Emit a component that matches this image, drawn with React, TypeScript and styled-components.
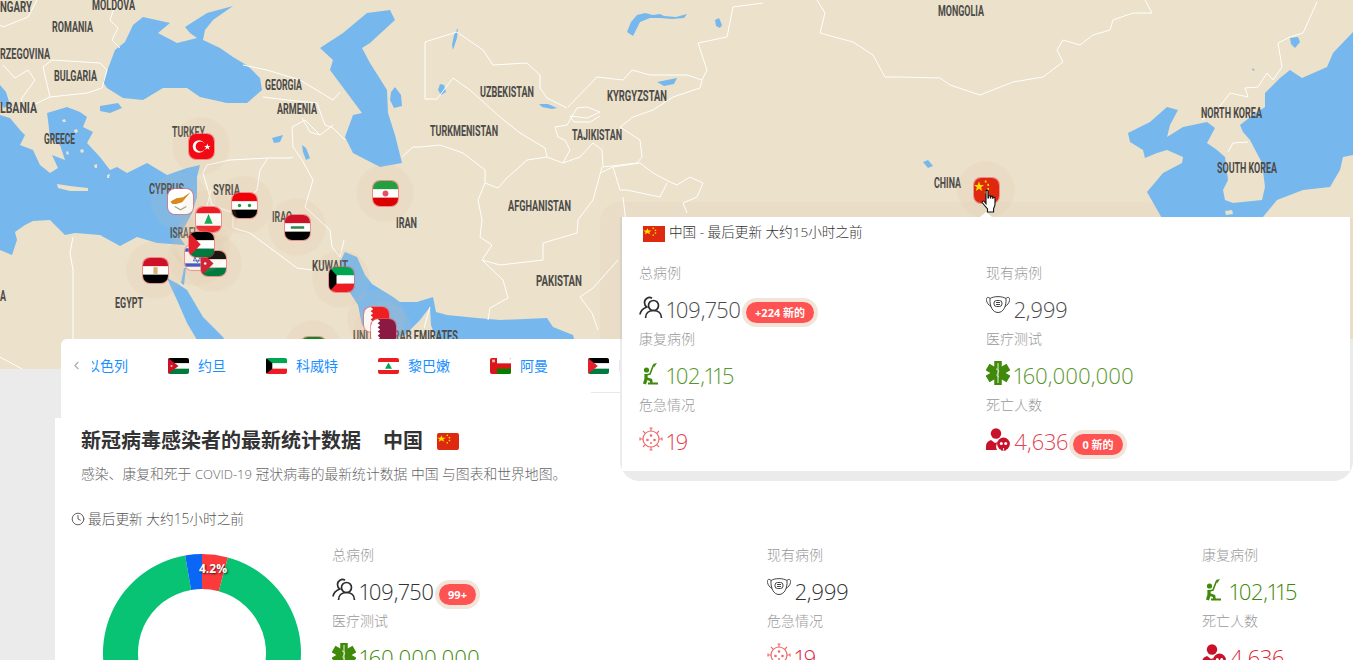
import * as React from 'react';
import styled, { createGlobalStyle } from 'styled-components';
import { ChevronLeft, Clock } from 'lucide-react';

const GlobalStyle = createGlobalStyle`
    html, body {
        margin: 0;
        padding: 0;
        overflow: hidden;
        background: #ebebeb;
        font-family: "Open Sans", "Noto Sans CJK SC", sans-serif;
    }
`;

const WATER = '#76b8ee';
const LAND = '#ece1ca';

const seas = [
    // black sea + azov
    '103,82 115,50 125,42 133,25 143,17 170,23 158,33 177,43 197,38 190,33 185,27 207,13 233,6 213,20 205,30 203,40 220,48 233,57 248,66 260,78 262,90 247,103 227,103 200,97 187,88 163,88 143,100 123,98 107,88',
    // caspian
    '367,13 390,10 395,20 370,43 362,48 370,63 387,90 388,113 395,135 402,163 380,167 353,153 345,137 353,115 362,113 330,70 333,60 320,48 343,33',
    // mediterranean
    '0,115 10,118 20,130 25,135 20,145 33,150 40,165 50,173 58,168 52,155 65,160 60,145 50,138 48,120 47,113 67,107 80,112 87,117 83,127 93,132 87,143 100,157 110,170 117,167 127,173 147,163 167,175 187,168 200,165 197,177 197,197 192,213 183,230 180,238 185,245 157,243 137,237 120,246 100,235 75,233 65,235 50,220 33,221 25,225 15,232 17,240 12,255 0,250',
    // adriatic
    '0,85 6,92 10,105 4,108 0,102',
    // marmara
    '100,106 118,103 122,108 110,113 100,111',
    // red sea
    '167,278 178,284 187,290 203,317 223,337 240,369 215,369 200,345 187,323 177,300 170,285',
    // gulf of aqaba
    '181,283 184,268 186,268 184,285',
    // persian gulf + oman
    '345,252 357,257 365,275 372,284 393,297 400,302 417,302 433,297 436,312 447,315 477,318 500,320 547,318 553,327 573,335 575,342 437,342 431,325 430,307 420,320 405,335 385,342 362,325 358,305 345,285 340,262',
    // east china sea, sea of japan
    '1353,32 1333,53 1327,67 1302,78 1290,70 1280,78 1265,93 1265,107 1253,115 1240,125 1243,132 1250,140 1262,163 1265,187 1262,200 1233,203 1225,200 1223,190 1228,180 1225,157 1217,150 1207,143 1215,128 1207,122 1183,127 1167,137 1170,125 1178,110 1167,107 1150,122 1128,133 1130,142 1143,150 1145,158 1157,153 1167,150 1183,157 1182,163 1163,173 1147,192 1163,220 1353,220',
];

const lakes = [
    '627,32 631,22 637,15 645,13 653,15 660,14 664,16 676,17 687,14 684,18 672,19 660,18 650,18 640,22 633,36',
    '657,82 667,80 677,78 674,84 664,86',
    '452,45 454,35 458,28 457,38 453,50',
    '438,90 440,84 444,85 446,92 441,95',
    '272,138 283,135 280,142 274,143',
    '302,145 306,148 310,158 306,160 303,152',
    '391,92 395,87 401,95 402,106 394,108 390,100',
    '715,20 719,18 722,25 720,28 716,26',
    '923,162 928,160 933,166 928,168',
    '1290,38 1298,37 1300,42 1295,48 1291,44',
    '539,104 548,104 557,108 552,109 542,107',
    '1252,70 1253,68 1255,71',
];

const landPatches = [
    // japan
    '1353,155 1343,157 1340,170 1330,187 1303,190 1277,200 1263,217 1353,220',
    // crete
    '57,184 70,186 88,188 88,191 70,191 58,188',
    // jeju-ish bits and aegean isles
    '1225,211 1232,210 1233,214 1226,215',
    '74,130 77,129 78,132 75,133',
    '66,152 68,151 69,154 67,155',
    '80,150 83,149 84,152 81,153',
    '94,165 97,164 97,168 95,168',
    '107,175 110,174 109,178 107,178',
    '62,120 65,119 66,122 63,122',
];

const borders = [
    '203,173 207,165 230,160 268,158 290,158 293,157',
    '292,127 293,147 302,160 313,180 305,207 330,230 332,247 340,257',
    '268,158 260,170 257,190 233,213 233,228',
    '233,228 250,233 297,268 313,270 330,263',
    '203,173 208,190 212,205 233,213',
    '243,65 267,70 300,80 333,100 340,92',
    '263,97 287,100 317,103 325,125 333,128 345,140',
    '292,127 305,120 320,135 333,125',
    '302,118 310,132 320,135',
    '402,157 413,147 420,147 440,145 463,153 485,170 485,183 498,188 507,178 527,160 547,157 563,163 580,157 593,143 602,150 603,167 637,163',
    '485,183 478,200 482,220 480,237 492,245 482,260 503,280 508,298 490,308 488,320',
    '482,260 500,265 543,260 543,243 577,233 578,220 583,213 593,200 602,167',
    '618,260 593,288 580,297 592,313 598,330',
    '425,99 425,42 457,32 483,50 493,65 527,63 540,75 540,88 547,98 567,108',
    '425,99 437,99 453,78 470,90 500,117 520,133 545,148 547,157',
    '568,107 597,77 623,80 632,70 650,75 687,75 702,80 700,88 673,97 653,110 633,117 620,127 640,140 642,157 637,163',
    '555,127 567,125 577,108 587,107 600,112 587,118 570,116 574,122 590,122 600,116',
    '555,127 558,137 565,140 570,150 563,163',
    '702,80 707,70 698,43 727,37 733,7 763,3',
    '817,0 825,13 820,33 853,42 873,55 885,77 900,77 940,78 950,85 980,95 1013,82 1043,77 1063,62 1057,50 1063,40 1080,45 1093,35 1110,30 1113,20 1133,13 1152,13 1145,0',
    '1317,2 1303,33 1290,37 1278,43 1282,67 1273,80 1267,73 1258,87 1245,88 1248,97 1230,93 1217,110 1202,120',
    '1228,152 1233,143 1248,142',
    '600,173 613,167 640,163 653,173 670,182 677,185 690,177 703,183 697,197 683,203 687,213',
    '613,167 620,190 627,190 660,197 667,183',
    '623,197 628,240',
    '73,237 70,253 73,270 73,342',
    '0,357 22,369',
    '52,60 100,63 107,70 102,88 87,93 50,97 43,67 52,60',
    '37,0 28,17 3,27 0,25',
    '117,0 110,20 118,28 112,40 120,48',
    '3,65 15,78 28,70 35,80 22,98 18,112',
    '50,97 18,112',
    '211,190 202,225 192,245',
    '340,257 344,240',
    '430,307 424,328',
];

const labels: [string, number, number, number][] = [
    ['NGARY', 0, 32, 7],
    ['MOLDOVA', 92, 135, 5],
    ['ROMANIA', 52, 93, 27],
    ['RZEGOVINA', 0, 50, 54],
    ['BULGARIA', 54, 97, 76],
    ['LBANIA', 0, 37, 108],
    ['GREECE', 44, 75, 139],
    ['GEORGIA', 265, 302, 85],
    ['ARMENIA', 277, 317, 109],
    ['TURKEY', 172, 205, 132],
    ['CYPRUS', 149, 184, 189],
    ['SYRIA', 213, 240, 190],
    ['IRAQ', 272, 292, 217],
    ['IRAN', 396, 417, 223],
    ['ISRAEL', 170, 198, 233],
    ['EGYPT', 115, 143, 303],
    ['KUWAIT', 312, 348, 266],
    ['A', 0, 6, 296],
    ['PAKISTAN', 536, 582, 281],
    ['UNITED ARAB EMIRATES', 353, 458, 336],
    ['UZBEKISTAN', 480, 534, 92],
    ['KYRGYZSTAN', 607, 667, 96],
    ['TURKMENISTAN', 430, 498, 131],
    ['TAJIKISTAN', 572, 622, 135],
    ['AFGHANISTAN', 508, 571, 206],
    ['MONGOLIA', 938, 984, 11],
    ['CHINA', 934, 961, 183],
    ['NORTH KOREA', 1201, 1262, 113],
    ['SOUTH KOREA', 1217, 1277, 168],
];

const Stripes = ({ top, mid, bottom }: { top: string; mid: string; bottom: string }) => (
    <>
        <rect width="30" height="10" fill={top} />
        <rect y="10" width="30" height="10" fill={mid} />
        <rect y="20" width="30" height="10" fill={bottom} />
    </>
);

const Serrated = ({ color }: { color: string }) => (
    <>
        <rect width="30" height="30" fill={color} />
        <polygon points="0,0 8,0 11,2.5 8,5 11,7.5 8,10 11,12.5 8,15 11,17.5 8,20 11,22.5 8,25 11,27.5 8,30 0,30" fill="#fff" />
    </>
);

const flags: Record<string, React.ReactNode> = {
    jo: (
        <>
            <Stripes top="#000" mid="#fff" bottom="#007a3d" />
            <polygon points="0,0 15,15 0,30" fill="#ce1126" />
            <circle cx="5" cy="15" r="1.5" fill="#fff" />
        </>
    ),
    ps: (
        <>
            <Stripes top="#000" mid="#fff" bottom="#007a3d" />
            <polygon points="0,0 14,15 0,30" fill="#e4202c" />
        </>
    ),
    kw: (
        <>
            <Stripes top="#00a651" mid="#fff" bottom="#ed1c24" />
            <polygon points="0,0 9,10 9,20 0,30" fill="#000" />
        </>
    ),
    lb: (
        <>
            <rect width="30" height="30" fill="#fff" />
            <rect width="30" height="7.5" fill="#ed1c24" />
            <rect y="22.5" width="30" height="7.5" fill="#ed1c24" />
            <polygon points="15,8.5 20,20 10,20" fill="#00a651" />
        </>
    ),
    om: (
        <>
            <rect width="30" height="30" fill="#db161b" />
            <rect x="10" width="20" height="10" fill="#fff" />
            <rect x="10" y="20" width="20" height="10" fill="#008000" />
            <rect x="3" y="3" width="4" height="5" fill="#f5b5b5" />
        </>
    ),
    il: (
        <>
            <rect width="30" height="30" fill="#fff" />
            <rect y="4" width="30" height="4" fill="#1a3fc4" />
            <rect y="22" width="30" height="4" fill="#1a3fc4" />
            <polygon points="15,9 20,19 10,19" fill="none" stroke="#1a3fc4" />
            <polygon points="15,21 20,11 10,11" fill="none" stroke="#1a3fc4" />
        </>
    ),
    eg: (
        <>
            <Stripes top="#ce1126" mid="#fff" bottom="#000" />
            <rect x="12.5" y="11" width="5" height="8" fill="#d8b070" />
        </>
    ),
    tr: (
        <>
            <rect width="30" height="30" fill="#f10a13" />
            <circle cx="12" cy="15" r="7.5" fill="#fff" />
            <circle cx="14" cy="15" r="6" fill="#f10a13" />
            <polygon points="22,11.5 23,14.3 26,14.3 23.6,16 24.5,19 22,17.2 19.5,19 20.4,16 18,14.3 21,14.3" fill="#fff" />
        </>
    ),
    cy: (
        <>
            <rect width="30" height="30" fill="#fff" />
            <polygon points="3,15 10,11 18,10 27,4 21,11 17,16 10,18 5,18" fill="#d98a1f" />
            <path d="M8 21l7 4 7-4" stroke="#9aa88a" strokeWidth="1.5" fill="none" />
        </>
    ),
    sy: (
        <>
            <Stripes top="#f00008" mid="#fff" bottom="#000" />
            <circle cx="9" cy="15" r="2" fill="#1a9a3c" />
            <circle cx="21" cy="15" r="2" fill="#1a9a3c" />
        </>
    ),
    iq: (
        <>
            <Stripes top="#ce1126" mid="#fff" bottom="#000" />
            <rect x="7" y="13.5" width="16" height="3" fill="#2a8a4a" />
        </>
    ),
    ir: (
        <>
            <Stripes top="#239f40" mid="#fff" bottom="#da0000" />
            <circle cx="15" cy="15" r="3.5" fill="#e0506a" />
        </>
    ),
    bh: <Serrated color="#f10a13" />,
    qa: <Serrated color="#8a1a42" />,
    sa: <rect width="30" height="30" fill="#0a8a22" />,
    cn: (
        <>
            <rect width="30" height="30" fill="#de2910" />
            <polygon points="6,4 7.5,8.5 12,8.5 8.5,11.2 9.8,15.5 6,13 2.2,15.5 3.5,11.2 0,8.5 4.5,8.5" fill="#ffde00" />
            <rect x="13" y="3" width="2" height="2.5" fill="#ffde00" />
            <rect x="16" y="7" width="2" height="2.5" fill="#ffde00" />
            <rect x="16" y="12" width="2" height="2.5" fill="#ffde00" />
            <rect x="13" y="16" width="2" height="2.5" fill="#ffde00" />
        </>
    ),
};

const Flag = ({ code }: { code: string }) => (
    <FlagSvg viewBox="0 0 30 30" preserveAspectRatio="none">
        {flags[code]}
    </FlagSvg>
);

const UsersIcon = () => (
    <IconSvg viewBox="0 0 24 24" fill="none" stroke="#2c2c2c" strokeWidth="1.7">
        <circle cx="14.5" cy="10.5" r="5" />
        <path d="M6.5 23c0-5 3.5-7.5 8-7.5s8 2.5 8 7.5" />
        <path d="M13 3.2A5 5 0 0 0 5.5 7.5c0 2 .8 3.5 2.3 4.5C4 13.5 1.5 16 1 19.5" />
    </IconSvg>
);

const MaskIcon = () => (
    <IconSvg viewBox="0 0 24 24" fill="none" stroke="#444" strokeWidth="1">
        <path d="M4 3.5C8 1 16 1 20 3.5C20.5 11 17.5 17.5 12 17.5C6.5 17.5 3.5 11 4 3.5Z" />
        <path d="M4 3.5C1.5 1 0 3 .5 5.500C1 8 2.500 10 5 11.500" />
        <path d="M20 3.500C22.500 1 24 3 23.500 5.500C23 8 21.500 10 19 11.500" />
        <rect x="8" y="5.500" width="8" height="6" rx="2.500" />
        <path d="M10 7.500h4M10 9.500h4" />
    </IconSvg>
);

const RecoverIcon = () => (
    <IconSvg viewBox="0 0 24 24" fill="#3f8a0a" stroke="none">
        <circle cx="7.500" cy="9" r="2.600" />
        <path d="M7 13L7 18L5.500 23" fill="none" stroke="#3f8a0a" strokeWidth="3.200" />
        <path d="M7 14L11 13L14.500 4" fill="none" stroke="#3f8a0a" strokeWidth="1.600" />
        <path d="M7.500 17.500L12 19L12.500 22.500" fill="none" stroke="#3f8a0a" strokeWidth="2.600" />
        <polygon points="14,3 18,2 15,6.500" />
        <rect x="9" y="21.500" width="10" height="2" />
    </IconSvg>
);

const StarLifeIcon = () => (
    <IconSvg viewBox="0 0 24 24" fill="none">
        <g stroke="#3f8a0a" strokeWidth="7.500">
            <path d="M12 0v24" />
            <path d="M1.600 6l20.800 12" />
            <path d="M22.400 6L1.600 18" />
        </g>
        <path d="M12 2v20M10 8c3 0 3 3 2 4s-2 3 1 4" stroke="#e7f0dc" strokeWidth="1" />
    </IconSvg>
);

const VirusIcon = () => (
    <IconSvg viewBox="0 0 24 24" fill="none" stroke="#f06a6a" strokeWidth="1.200">
        <circle cx="12" cy="12" r="8" />
        <path d="M12 4V1M12 23v-3M4 12H1M23 12h-3M6.300 6.300L4 4M20 20l-2.300-2.300M6.300 17.700L4 20M20 4l-2.300 2.300" />
        <path d="M10.500 1h3M10.500 23h3M1 10.500v3M23 10.500v3" />
        <g fill="#f06a6a" stroke="none">
            <circle cx="12" cy="8.500" r="1.300" />
            <circle cx="8.500" cy="13" r="1.300" />
            <circle cx="15.500" cy="13" r="1.300" />
            <circle cx="12" cy="16" r="1" />
        </g>
    </IconSvg>
);

const DeathIcon = () => (
    <IconSvg viewBox="0 0 24 24" fill="#c9112a">
        <circle cx="10" cy="6.500" r="5.200" />
        <path d="M0 23v-4c0-3 2-5 5-6l4 3 3-1c-2 2-2.500 5-1 8Z" />
        <circle cx="17.500" cy="17" r="6.400" />
        <rect x="15" y="20" width="5" height="3.500" />
        <g fill="#fff">
            <circle cx="15.300" cy="16.500" r="1.500" />
            <circle cx="19.700" cy="16.500" r="1.500" />
            <rect x="17" y="21" width=".9" height="2.500" />
        </g>
    </IconSvg>
);

type Tone = 'plain' | 'green' | 'red';

type Stat = {
    label: string;
    value: string;
    tone: Tone;
    icon: React.ReactNode;
    badge?: string;
};

const popupStats: Stat[] = [
    { label: '总病例', value: '109,750', tone: 'plain', icon: <UsersIcon />, badge: '+224 新的' },
    { label: '现有病例', value: '2,999', tone: 'plain', icon: <MaskIcon /> },
    { label: '康复病例', value: '102,115', tone: 'green', icon: <RecoverIcon /> },
    { label: '医疗测试', value: '160,000,000', tone: 'green', icon: <StarLifeIcon /> },
    { label: '危急情况', value: '19', tone: 'red', icon: <VirusIcon /> },
    { label: '死亡人数', value: '4,636', tone: 'red', icon: <DeathIcon />, badge: '0 新的' },
];

const mainStats: Stat[] = [
    { label: '总病例', value: '109,750', tone: 'plain', icon: <UsersIcon />, badge: '99+' },
    { label: '现有病例', value: '2,999', tone: 'plain', icon: <MaskIcon /> },
    { label: '康复病例', value: '102,115', tone: 'green', icon: <RecoverIcon /> },
    { label: '医疗测试', value: '160,000,000', tone: 'green', icon: <StarLifeIcon /> },
    { label: '危急情况', value: '19', tone: 'red', icon: <VirusIcon /> },
    { label: '死亡人数', value: '4,636', tone: 'red', icon: <DeathIcon /> },
];

const markers: [string, number, number][] = [
    ['ir', 385, 193],
    ['tr', 201, 146],
    ['cy', 180, 201],
    ['sy', 244, 205],
    ['lb', 208, 219],
    ['iq', 297, 227],
    ['eg', 155, 270],
    ['il', 197, 257],
    ['jo', 213, 263],
    ['ps', 201, 244],
    ['kw', 341, 279],
    ['sa', 313, 349],
    ['bh', 376, 319],
    ['qa', 383, 331],
    ['cn', 986, 190],
];

const tabs = [
    ['jo', '约旦'],
    ['kw', '科威特'],
    ['lb', '黎巴嫩'],
    ['om', '阿曼'],
    ['ps', '巴勒斯坦'],
];

const StatList = ({ stats, soft }: { stats: Stat[]; soft?: boolean }) => (
    <>
        {stats.map(s => (
            <StatBlock key={s.label}>
                <StatLabel>{s.label}</StatLabel>
                <StatValue>
                    <IconBox>{s.icon}</IconBox>
                    <StatNum $tone={s.tone} $soft={soft}>{s.value}</StatNum>
                    {s.badge && <Badge>{s.badge}</Badge>}
                </StatValue>
            </StatBlock>
        ))}
    </>
);

// donut slice between two clock angles
const slice = (from: number, to: number) => {
    const pt = (r: number, a: number) => {
        const rad = ((a - 90) * Math.PI) / 180;
        return `${(99 + r * Math.cos(rad)).toFixed(2)} ${(99 + r * Math.sin(rad)).toFixed(2)}`;
    };
    const large = to - from > 180 ? 1 : 0;
    return `M${pt(99, from)}A99 99 0 ${large} 1 ${pt(99, to)}L${pt(64, to)}A64 64 0 ${large} 0 ${pt(64, from)}Z`;
};

export default function App() {
    return (
        <Page>
            <GlobalStyle />
            <MapArea>
                <MapSvg viewBox="0 0 1353 369">
                    <rect x="600" y="202" width="753" height="180" rx="20" fill="#e9ddc7" />
                    {seas.map((p, i) => <polygon key={i} points={p} fill={WATER} />)}
                    {lakes.map((p, i) => <polygon key={i} points={p} fill={WATER} />)}
                    {landPatches.map((p, i) => <polygon key={i} points={p} fill={LAND} />)}
                    {borders.map((p, i) => (
                        <polyline key={i} points={p} fill="none" stroke="#fff" strokeWidth="1" />
                    ))}
                    <rect x="620" y="217" width="2" height="122" fill="#d8d2c4" />
                    {labels.map(([name, x1, x2, y]) => (
                        <CountryText key={name} x={x1} y={y + 5} textLength={x2 - x1} lengthAdjust="spacingAndGlyphs">
                            {name}
                        </CountryText>
                    ))}
                </MapSvg>
                {markers.map(([code, x, y]) => (
                    <Marker key={code} $x={x} $y={y}>
                        <MarkerTile>
                            <Flag code={code} />
                        </MarkerTile>
                    </Marker>
                ))}
                <HandCursor viewBox="0 0 17 24">
                    <path
                        d="M5 2.200c0-1.400 2-1.400 2 0V9h.4V7.600c0-1.200 2-1.200 2 0V9h.3V8c0-1.200 2-1.200 2 0v1.200h.3V9c0-1.100 2-1.100 2 0v6c0 2.200-.7 3.200-1.400 4.500V23H6.500v-3L1.500 14c-1-1.300.7-2.700 1.800-1.500L5 14.600Z"
                        fill="#fff"
                        stroke="#111"
                        strokeWidth="1.100"
                    />
                </HandCursor>
            </MapArea>

            <TabsCard>
                <TabRow>
                    <TabArrow>
                        <ChevronLeft size={13} color="#aaa" />
                    </TabArrow>
                    <TabViewport>
                        <TabList>
                            <TabLink>以色列</TabLink>
                            {tabs.map(([code, name]) => (
                                <TabItem key={code}>
                                    <TabFlag><Flag code={code} /></TabFlag>
                                    <TabLink>{name}</TabLink>
                                </TabItem>
                            ))}
                        </TabList>
                    </TabViewport>
                </TabRow>
                <TabRule />
            </TabsCard>

            <MainCard>
                <Heading>
                    <span>新冠病毒感染者的最新统计数据</span>
                    <HeadingCountry>中国</HeadingCountry>
                    <HeadingFlag><Flag code="cn" /></HeadingFlag>
                </Heading>
                <SubTitle>
                    感染、康复和死于 <LatinRun>COVID-19</LatinRun> 冠状病毒的最新统计数据 中国 与图表和世界地图。
                </SubTitle>
                <UpdatedRow>
                    <Clock size={14} color="#555" strokeWidth={1.6} />
                    最后更新 大约15小时之前
                </UpdatedRow>
                <SummaryRow>
                    <ChartBox>
                        <svg width="198" height="198" viewBox="0 0 198 198">
                            <path d={slice(15.1, 350.2)} fill="#07c373" />
                            <path d={slice(350.2, 360)} fill="#0a66f5" />
                            <path d={slice(0, 15.1)} fill="#fb3a3c" />
                        </svg>
                        <ChartLabel>4.2%</ChartLabel>
                    </ChartBox>
                    <MainGrid>
                        <StatList stats={mainStats} />
                    </MainGrid>
                </SummaryRow>
            </MainCard>

            <PopupBacking />
            <Popup>
                <PopupArrow />
                <PopupHeader>
                    <PopupFlag><Flag code="cn" /></PopupFlag>
                    中国 - 最后更新 大约15小时之前
                </PopupHeader>
                <PopupGrid>
                    <StatList stats={popupStats} soft />
                </PopupGrid>
            </Popup>
        </Page>
    );
}

const Page = styled.div`
    position: relative;
    width: 1353px;
    height: 660px;
    overflow: hidden;
    background: #ebebeb;
`;

const MapArea = styled.div`
    position: relative;
    height: 369px;
    overflow: hidden;
    background: ${LAND};
`;

const MapSvg = styled.svg`
    display: block;
    width: 1353px;
    height: 369px;
`;

const CountryText = styled.text`
    font-family: "Roboto", sans-serif;
    font-weight: 700;
    font-size: 14px;
    fill: #4b4a48;
`;

const Marker = styled.div<{ $x: number; $y: number }>`
    position: absolute;
    left: ${p => p.$x - 28}px;
    top: ${p => p.$y - 28}px;
    width: 56px;
    height: 56px;
    border-radius: 50%;
    background: rgba(222, 190, 160, 0.12);
    box-shadow: 0 0 0 1px rgba(222, 196, 170, 0.12);
    display: flex;
    align-items: center;
    justify-content: center;
`;

const MarkerTile = styled.div`
    width: 25px;
    height: 25px;
    border-radius: 7px;
    overflow: hidden;
    box-shadow: 0 0 0 1px rgba(240, 90, 100, 0.6);
    display: flex;
`;

const FlagSvg = styled.svg`
    display: block;
    width: 100%;
    height: 100%;
`;

const HandCursor = styled.svg`
    position: absolute;
    left: 981px;
    top: 189px;
    width: 17px;
    height: 24px;
`;

const TabsCard = styled.div`
    position: relative;
    z-index: 1;
    margin: -30px 0 0 61px;
    height: 79px;
    background: #fff;
    border-top-left-radius: 6px;
`;

const TabRow = styled.div`
    display: flex;
    align-items: center;
    height: 53px;
`;

const TabArrow = styled.div`
    width: 31px;
    padding-left: 9px;
    box-sizing: border-box;
    display: flex;
    align-items: center;
`;

const TabViewport = styled.div`
    width: 528px;
    overflow: hidden;
`;

const TabList = styled.div`
    display: flex;
    align-items: center;
    gap: 40px;
    margin-left: -6px;
    width: max-content;
`;

const TabItem = styled.div`
    display: flex;
    align-items: center;
    gap: 9px;
`;

const TabFlag = styled.div`
    width: 21px;
    height: 16px;
    border-radius: 2px;
    overflow: hidden;
`;

const TabLink = styled.span`
    font-size: 14px;
    line-height: 20px;
    color: #1890ff;
`;

const TabRule = styled.div`
    margin-left: 530px;
    height: 1px;
    background: #e8e8e8;
`;

const MainCard = styled.div`
    position: relative;
    margin-left: 55px;
    height: 242px;
    padding-top: 9px;
    box-sizing: border-box;
    background: #fff;
    overflow: hidden;
`;

const Heading = styled.h1`
    display: flex;
    align-items: center;
    margin: 0 0 0 26px;
    font-size: 20px;
    line-height: 28px;
    font-weight: 700;
    color: #333;
`;

const HeadingCountry = styled.span`
    margin-left: 22px;
`;

const HeadingFlag = styled.div`
    margin-left: 14px;
    width: 22px;
    height: 17px;
    border-radius: 2px;
    overflow: hidden;
`;

const SubTitle = styled.p`
    margin: 9px 0 0 26px;
    font-size: 13.8px;
    line-height: 20px;
    font-weight: 300;
    color: #666;
`;

const LatinRun = styled.span`
    font-size: 13px;
`;

const UpdatedRow = styled.div`
    display: flex;
    align-items: center;
    gap: 3px;
    margin: 25px 0 0 16px;
    font-size: 13.7px;
    line-height: 20px;
    font-weight: 300;
    color: #555;
`;

const SummaryRow = styled.div`
    display: flex;
    align-items: flex-start;
    margin-top: 16px;
`;

const ChartBox = styled.div`
    position: relative;
    width: 198px;
    height: 198px;
    margin: 9px 31px 0 48px;
    flex: none;
`;

const ChartLabel = styled.span`
    position: absolute;
    left: 96px;
    top: 8px;
    font-size: 12px;
    line-height: 14px;
    font-weight: 700;
    color: #fff;
    text-shadow: 1px 1px 2px rgba(0, 0, 0, 0.7);
`;

const MainGrid = styled.div`
    display: grid;
    grid-template-columns: 435px 435px 1fr;
    grid-auto-rows: 66px;
    align-content: start;
    flex: 1;
`;

const StatBlock = styled.div`
    height: 66px;
`;

const StatLabel = styled.div`
    font-size: 14px;
    line-height: 20px;
    font-weight: 300;
    color: #999;
`;

const StatValue = styled.div`
    display: flex;
    align-items: center;
    height: 30px;
    margin-top: 11px;
`;

const IconBox = styled.div`
    width: 24px;
    height: 24px;
    margin-right: 4px;
    margin-top: -5px;
    flex: none;
`;

const IconSvg = styled.svg`
    display: block;
    width: 24px;
    height: 24px;
`;

const toneColor = { plain: '#333', green: '#3f8a0a', red: '#e0283a' };

const StatNum = styled.span<{ $tone: Tone; $soft?: boolean }>`
    font-size: 22px;
    line-height: 30px;
    font-weight: 300;
    font-variant-numeric: proportional-nums;
    color: ${p => toneColor[p.$tone]};
    opacity: ${p => (p.$soft ? 0.88 : 1)};
`;

const Badge = styled.span`
    margin: 6px 0 0 5px;
    padding: 0 9px;
    height: 21px;
    line-height: 21px;
    border-radius: 11px;
    font-size: 11px;
    font-weight: 700;
    color: #fff;
    background: #ff5252;
    box-shadow: 0 0 0 4px #f2e4d8;
`;

const PopupBacking = styled.div`
    position: absolute;
    z-index: 2;
    left: 620px;
    top: 339px;
    width: 733px;
    height: 142px;
    background: #ebebeb;
    border-radius: 0 0 20px 20px;
`;

const Popup = styled.div`
    position: absolute;
    z-index: 3;
    left: 622px;
    top: 217px;
    width: 728px;
    height: 254px;
    background: #fff;
    box-sizing: border-box;
    padding: 4px 0 0 17px;
`;

const PopupArrow = styled.div`
    position: absolute;
    left: 358px;
    top: -5px;
    width: 0;
    height: 0;
    border-left: 6px solid transparent;
    border-right: 6px solid transparent;
    border-bottom: 5px solid #fff;
`;

const PopupHeader = styled.div`
    display: flex;
    align-items: center;
    gap: 4px;
    margin-left: 4px;
    height: 20px;
    font-size: 13.6px;
    font-weight: 300;
    color: #333;
`;

const PopupFlag = styled.div`
    width: 22px;
    height: 16px;
    margin-top: 5px;
    overflow: hidden;
`;

const PopupGrid = styled.div`
    display: grid;
    grid-template-columns: 347px 347px;
    margin-top: 22px;
`;
